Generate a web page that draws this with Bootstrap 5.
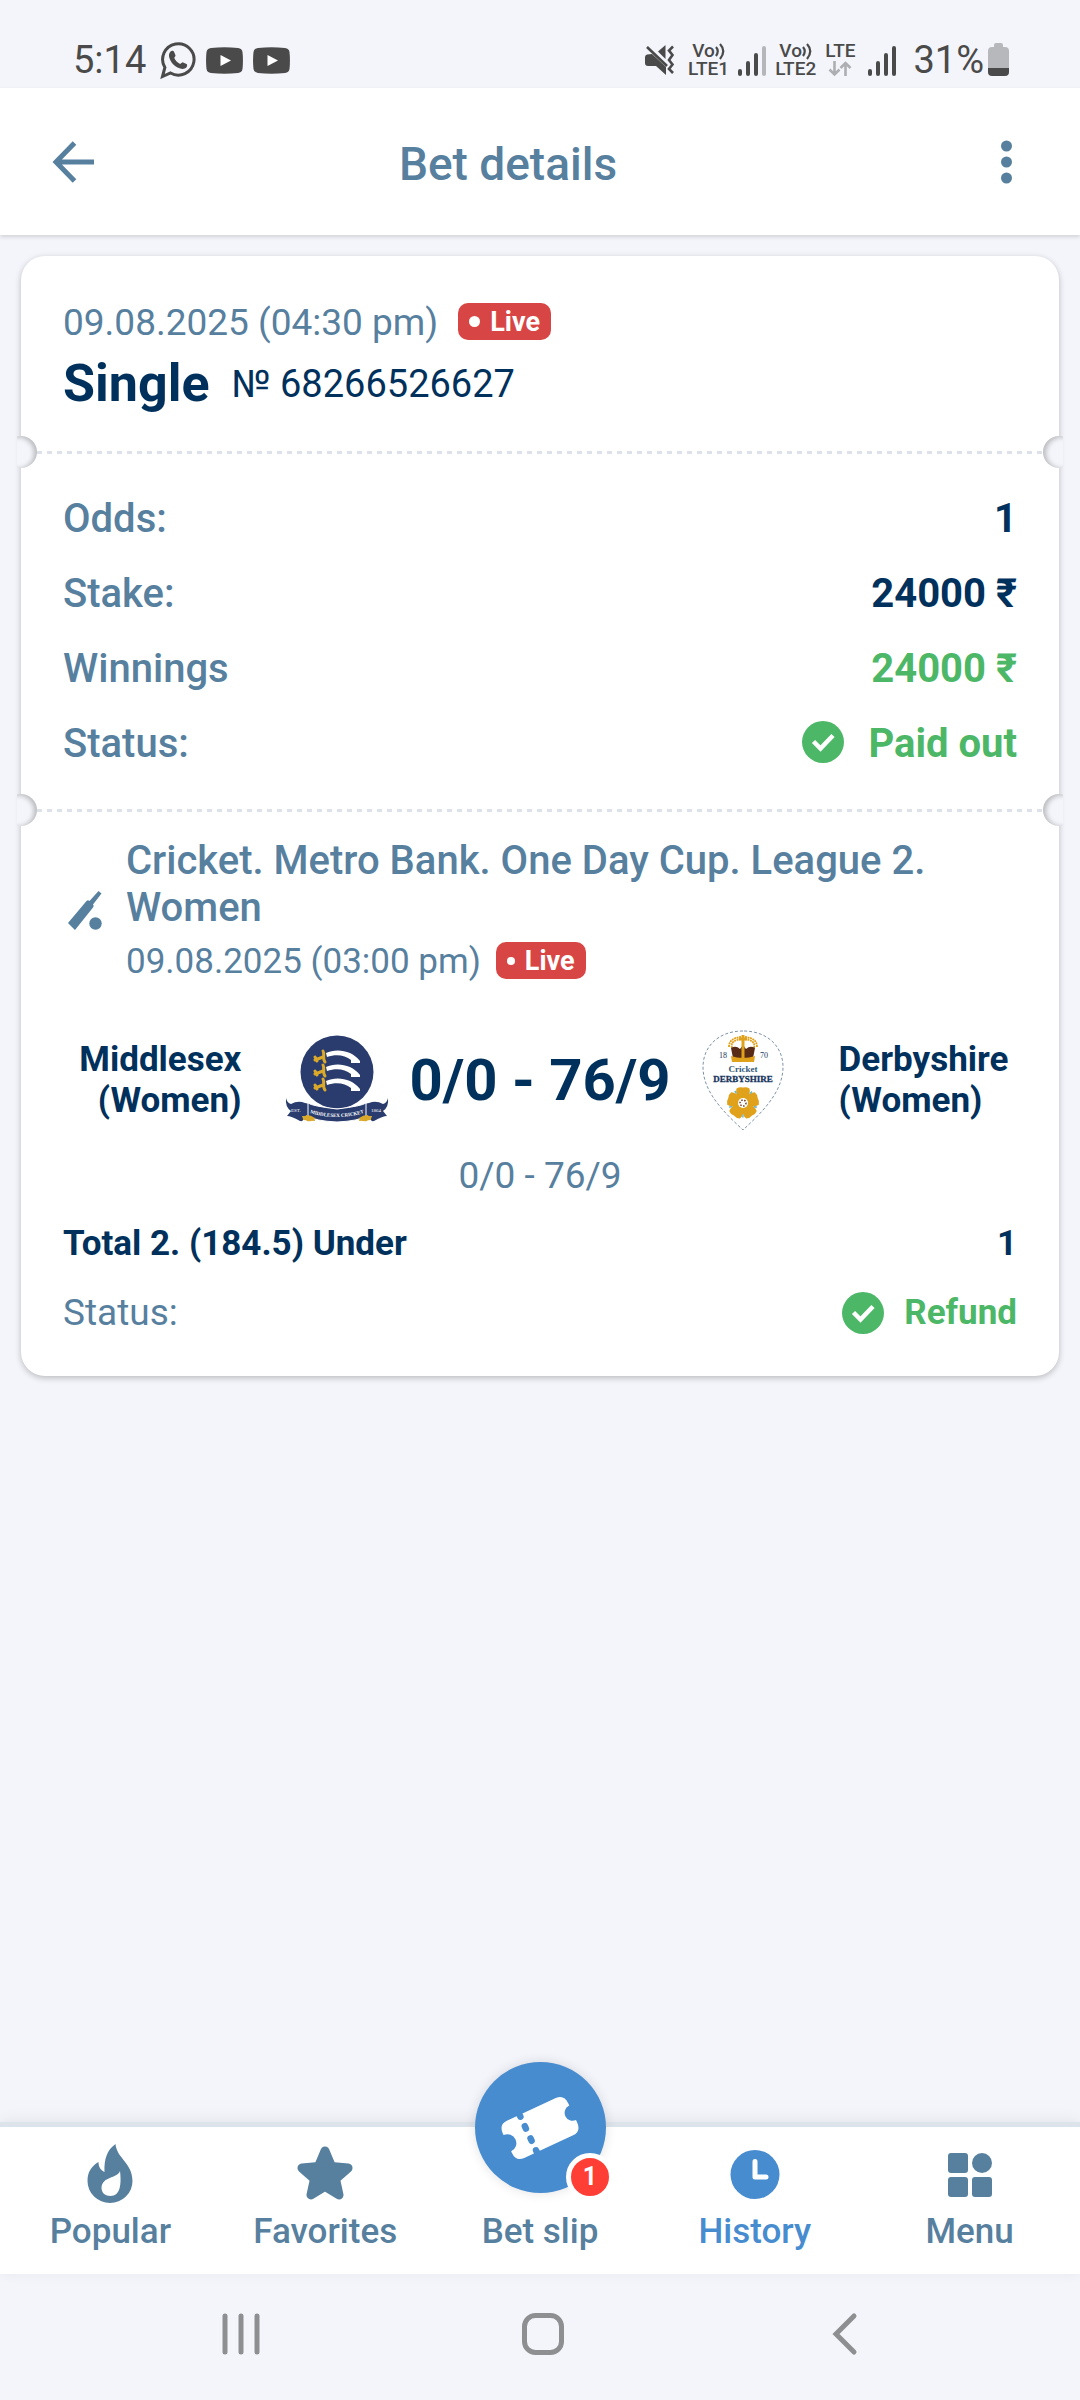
<!DOCTYPE html>
<html lang="en">
<head>
<meta charset="utf-8">
<meta name="viewport" content="width=device-width, initial-scale=1">
<title>Bet details</title>
<link href="https://cdn.jsdelivr.net/npm/bootstrap@5.3.0/dist/css/bootstrap.min.css" rel="stylesheet">
<style>
:root{--slate:#57809f;--navy:#00315c;--ok:#4db768;--live:#d84545;--brand:#488cd0;--page:#f4f5fa;--ink:#4a4a4a}
body{background:var(--page);color:var(--navy);font-family:Roboto,"Noto Sans",sans-serif;font-size:37px;line-height:40px}
svg{display:block;flex:none}
.fw-mid{font-weight:500}
.c-slate{color:var(--slate)}
.c-ok{color:var(--ok)}
.statusbar{height:88px;padding:40px 71px 0 73px;color:var(--ink);font-size:38px}
.status-left{gap:10px}
.status-right{gap:9px}
.lte{font-size:19px;line-height:18px;font-weight:500}
.topbar{height:147px;padding:0 36px;box-shadow:0 2px 4px rgba(0,0,0,.14)}
.topbar h1{font-size:46px;line-height:52px;font-weight:500;padding-top:5px;margin-right:64px}
.iconbtn{width:64px;height:64px;padding:0;border:0;background:none;color:var(--slate)}
.content{padding:21px 21px 48px}
.ticket{border:0;border-radius:24px;box-shadow:0 2px 6px rgba(0,0,0,.24);color:var(--navy)}
.part{padding-left:42px;padding-right:42px}
.part-head{padding-top:47px;padding-bottom:36px}
.part-sum{padding-top:27px;padding-bottom:28px}
.part-event{padding-top:25px;padding-bottom:42px}
.tear{position:relative;height:3px;margin:0 16px;background:repeating-linear-gradient(90deg,#dde2ea 0 5px,transparent 5px 10px)}
.tear::before,.tear::after{content:"";position:absolute;top:-15px;width:32px;height:32px;border-radius:50%;background:var(--page)}
.tear::before{left:-32px;clip-path:inset(0 0 0 12px);box-shadow:inset -3px 1px 5px rgba(0,0,0,.24)}
.tear::after{right:-32px;clip-path:inset(0 12px 0 0);box-shadow:inset 3px 1px 5px rgba(0,0,0,.24)}
.placed{gap:20px}
.starts{gap:15px;font-size:35px;padding-top:11px}
.live{background:var(--live);color:#fff;border-radius:10px;height:37px;padding:0 11px;font-size:27px;line-height:36px;font-weight:700;gap:10px}
.live i{width:11px;height:11px;border-radius:50%;background:#fff}
.starts .live i{width:8px;height:8px}
.kind{font-size:52px;line-height:62px;font-weight:700}
.headline{margin-top:10px;gap:22px}
.betno{font-size:38px;line-height:62px}
.sumrow{font-size:40px;line-height:75px}
.league{font-size:40px;line-height:47px;font-weight:500}
.sport{margin-right:15px}
.team{flex:1 1 0;line-height:41px}
.team,.outcome{font-weight:700;font-size:35px}
.teams{gap:44px;margin-top:46px}
.score{font-size:58px;line-height:104px;font-weight:700;padding:0 20px}
.row-gap{margin-top:28px}
.tabbar{border-top:5px solid #dde3ea;padding:0 3px;box-shadow:0 -2px 14px rgba(0,0,0,.07)}
.tabbar a{flex:1 1 0;padding:16px 0 22px;gap:9px;font-size:35px;font-weight:500;color:var(--slate);text-decoration:none}
.tabbar a.current{color:var(--brand)}
.tabicon{height:60px}
.fab{position:absolute;top:-65px;left:50%;margin-left:-65px;width:131px;height:131px;border-radius:50%;background:var(--brand);box-shadow:0 0 12px rgba(0,0,0,.12)}
.counter{position:absolute;right:-8px;bottom:-8px;width:48px;height:48px;border:5px solid #fff;border-radius:50%;background:#ff3e35;color:#fff;font-size:25px;line-height:38px;font-weight:700}
.sysnav{height:126px;gap:238px;padding:0 0 2px 6px}
.sysnav .iconbtn{color:#8e8f91}
</style>
</head>
<body class="d-flex flex-column min-vh-100">

<div class="statusbar d-flex justify-content-between align-items-start">
  <div class="status-left d-flex align-items-center">
    <span class="me-1">5:14</span>
    <svg width="36" height="38" viewBox="0 0 36 38" fill="none" stroke="currentColor" stroke-width="3"><path d="M2.500 35.500l2.400-9A15.700 15.700 0 1 1 10.500 32z"/><path d="M10.500 10.500c1-1.200 3-1 3.500.3l1.500 3.500c.3 1-1.300 2.200-1.200 2.800 1 2.600 3.200 4.800 5.800 5.800.8.200 2-1.900 3-1.500l3.400 1.700c1 .5.700 2.200 0 3.200-1.700 2-4.500 2-7 1-5.300-2-9-6-10.300-11-.6-2.200 0-4.500 1.300-5.800z" fill="currentColor" stroke="none"/></svg>
    <svg width="37" height="27" viewBox="0 0 37 27"><path fill="currentColor" d="M5 1Q18.500-.6 32 1q4 .5 4.500 4 .9 8.500 0 17-.5 3.500-4.500 4-13.500 1.500-27 0-4-.5-4.500-4-.9-8.500 0-17Q1 1.500 5 1z"/><path fill="#fff" d="M14.500 8l10.500 5.500L14.500 19z"/></svg>
    <svg width="37" height="27" viewBox="0 0 37 27"><path fill="currentColor" d="M5 1Q18.500-.6 32 1q4 .5 4.500 4 .9 8.500 0 17-.5 3.500-4.500 4-13.500 1.500-27 0-4-.5-4.500-4-.9-8.500 0-17Q1 1.500 5 1z"/><path fill="#fff" d="M14.500 8l10.500 5.500L14.500 19z"/></svg>
  </div>
  <div class="status-right d-flex align-items-center">
    <svg class="me-1" width="30" height="30" viewBox="0 0 30 30"><path fill="currentColor" d="M20.500 0v14L13 6.500zM0 12q0-2 2-2.500l5-.5L21 22v8l-10-9H3q-3 0-3-3z"/><path d="M2 2l20 19M28 1.500l-4 4 3.500 4.500-3.500 5 3.500 4.500-3.500 4.500 4 4" fill="none" stroke="currentColor" stroke-width="2.600"/></svg>
    <div class="lte">
      <div class="d-flex justify-content-center">Vo<svg width="10" height="18" viewBox="0 0 10 18" fill="none" stroke="currentColor" stroke-width="2.200"><path d="M1 5q3.500 4 0 9M5 2q6.500 7 0 15"/></svg></div><div>LTE1</div>
    </div>
    <svg width="28" height="31" viewBox="0 0 28 31" stroke="currentColor" stroke-width="4" stroke-linecap="round"><path d="M2 26v3M10 18v11M18 10v19"/><path d="M26 3v26" stroke="#b5b6b9"/></svg>
    <div class="lte">
      <div class="d-flex justify-content-center">Vo<svg width="10" height="18" viewBox="0 0 10 18" fill="none" stroke="currentColor" stroke-width="2.200"><path d="M1 5q3.500 4 0 9M5 2q6.500 7 0 15"/></svg></div><div>LTE2</div>
    </div>
    <div class="lte">
      <div>LTE</div>
      <svg width="24" height="18" viewBox="0 0 24 18" class="mx-auto" fill="none" stroke="#adaeb1" stroke-width="2.600"><path d="M6.500 1v13M1.500 9.500l5 5 5-5M17.500 16V3M12.500 8l5-5 5 5"/></svg>
    </div>
    <svg class="ms-1 me-2" width="28" height="31" viewBox="0 0 28 31" stroke="currentColor" stroke-width="4" stroke-linecap="round"><path d="M2 26v3M10 18v11M18 10v19M26 3v26"/></svg>
    <div class="d-flex align-items-center gap-1">
      <span>31%</span>
      <svg width="21" height="34" viewBox="0 0 21 34"><path fill="#b7b8bc" d="M6 2q0-2 2-2h5q2 0 2 2v2h2q4 0 4 4v17H0V8q0-4 4-4h2z"/><path fill="currentColor" d="M0 25h21v4q0 4-4 4H4q-4 0-4-4z"/></svg>
    </div>
  </div>
</div>

<header class="topbar bg-white d-flex justify-content-between align-items-center">
  <button type="button" class="iconbtn" aria-label="Back"><svg width="64" height="64" viewBox="0 0 64 64" fill="none" stroke="currentColor" stroke-width="5"><path d="M58 32H20M38.500 13L20 32l18.500 19"/></svg></button>
  <h1 class="c-slate mb-0">Bet details</h1>
  <button type="button" class="iconbtn" aria-label="More"><svg width="64" height="64" viewBox="0 0 64 64" fill="currentColor"><circle cx="26.500" cy="16" r="5.500"/><circle cx="26.500" cy="32" r="5.500"/><circle cx="26.500" cy="48" r="5.500"/></svg></button>
</header>

<main class="content flex-grow-1">
  <section class="card ticket">
    <div class="part part-head">
      <div class="placed d-flex align-items-start">
        <span class="c-slate">09.08.2025 (04:30 pm)</span>
        <span class="live d-flex align-items-center"><i></i>Live</span>
      </div>
      <div class="headline d-flex align-items-center">
        <span class="kind">Single</span>
        <span class="betno">№ 68266526627</span>
      </div>
    </div>

    <div class="tear"></div>

    <div class="part part-sum">
      <div class="sumrow d-flex justify-content-between"><span class="c-slate fw-mid">Odds:</span><span class="fw-bold">1</span></div>
      <div class="sumrow d-flex justify-content-between"><span class="c-slate fw-mid">Stake:</span><span class="fw-bold">24000 ₹</span></div>
      <div class="sumrow d-flex justify-content-between"><span class="c-slate fw-mid">Winnings</span><span class="fw-bold c-ok">24000 ₹</span></div>
      <div class="sumrow d-flex justify-content-between"><span class="c-slate fw-mid">Status:</span>
        <span class="fw-bold c-ok d-flex align-items-center gap-4">
          <svg class="mb-1" width="42" height="42" viewBox="0 0 42 42"><circle cx="21" cy="21" r="21" fill="currentColor"/><path d="M11.500 20.500l7 7L31 14.500" fill="none" stroke="#fff" stroke-width="4.500"/></svg>Paid out</span>
      </div>
    </div>

    <div class="tear"></div>

    <div class="part part-event">
      <div class="d-flex align-items-center">
        <svg class="sport c-slate" width="48" height="48" viewBox="0 0 48 48" fill="currentColor"><path d="M5 37l18.500-22q1.500-1.500 3 0L35.500 5l3 2.500L30 18.500q1.500 1.500 0 3L12 44z"/><circle cx="32.500" cy="37.500" r="6.200"/></svg>
        <div>
          <div class="league c-slate">Cricket. Metro Bank. One Day Cup. League 2. Women</div>
          <div class="starts d-flex align-items-start">
            <span class="c-slate">09.08.2025 (03:00 pm)</span>
            <span class="live d-flex align-items-center"><i></i>Live</span>
          </div>
        </div>
      </div>

      <div class="teams d-flex align-items-center">
        <div class="team text-end">Middlesex<br>(Women)</div>
        <div class="d-flex align-items-center">
          <svg width="104" height="104" viewBox="0 0 104 104">
            <circle cx="52" cy="44" r="36.500" fill="#293c6d"/>
            <g id="sword"><path fill="#fff" d="M41 25c10-5 26-3 34 8v2h-9v-3c-6-5-15-6-24-3z"/><path d="M30 32l8-3M38 23c2 3-1 8 2 11M30 29l2 4" stroke="#dba92a" stroke-width="3" fill="none" stroke-linecap="round"/></g>
            <use href="#sword" y="14"/><use href="#sword" y="28"/>
            <path fill="#dba92a" d="M16 84l13 1 1 8-12-1zM75 85l13-1-2 8-12 1z"/>
            <path fill="#293c6d" d="M1 70q1 5 5 6 7-4 14-1l5 1v12H17q3 6-2 5Q6 88 2 88l4-5q-6-4-5-13zM103 70q-1 5-5 6-7-4-14-1l-5 1v12h8q-3 6 2 5 9-5 13-5l-4-5q6-4 5-13z"/>
            <path fill="#293c6d" stroke="#fff" d="M23 75q4 3 29 6 25-3 29-6v13q-7 5-29 6-22-1-29-6z"/>
            <path fill="#dba92a" d="M21 87q5 0 9 3-2 4-8 3-3-3-1-6zM83 87q-5 0-9 3 2 4 8 3 3-3 1-6z"/>
            <path id="scroll" d="M22 84q30 10 60 0" fill="none"/>
            <text font-family="Liberation Serif,serif" font-size="5" font-weight="700" fill="#fff"><textPath href="#scroll" startOffset="50%" text-anchor="middle">MIDDLESEX CRICKET</textPath></text>
            <text x="6" y="84" font-family="Liberation Serif,serif" font-size="5" fill="#fff">EST.</text><text x="86" y="84" font-family="Liberation Serif,serif" font-size="5" fill="#fff">1864</text>
          </svg>
          <div class="score">0/0 - 76/9</div>
          <svg width="104" height="104" viewBox="0 0 104 104">
            <path d="M52 3C27 3 12 19 12 39c0 26 23 47 40 63 17-16 40-37 40-63C92 19 77 3 52 3z" fill="#fff" stroke="#7d92a8" stroke-width="1" stroke-dasharray="3 2"/>
            <path d="M41 20q-2-8 10-9M63 20q2-8-10-9M38 19q0-9 12-10M66 19q0-9-12-10" fill="none" stroke="#e0a11b" stroke-width="1.800" stroke-dasharray="2 .6"/>
            <path fill="#592c18" d="M40 20q5-3 9 1l3-4 3 4q4-4 9-1l-2 10H42z"/>
            <path fill="#e0a11b" d="M50.500 13h3v17h-3zM40 28q12 4 24 0l-1 6H41zM50.500 7h3v2.500H56v3h-2.500V15h-3v-2.500H48v-3h2.500z"/>
            <g font-family="Liberation Serif,serif" text-anchor="middle" fill="#17365d"><text x="32" y="30" font-size="8">18</text><text x="73" y="30" font-size="8">70</text><text x="52" y="44" font-size="9" font-weight="700" fill="#315878">Cricket</text><text x="52" y="54" font-size="9" font-weight="700" stroke="#17365d" stroke-width=".3">DERBYSHIRE</text></g>
            <g transform="translate(52 75)"><g fill="#e0a11b"><path id="petal" d="M-3.500-3.500Q-8-9-6.500-14.500q3-2 6.500-1 3.500-1 6.500 1Q8-9 3.500-3.500z"/><use href="#petal" transform="rotate(72)"/><use href="#petal" transform="rotate(144)"/><use href="#petal" transform="rotate(216)"/><use href="#petal" transform="rotate(288)"/></g><circle r="5" fill="#fff"/><circle r="3" fill="none" stroke="#7a3c22" stroke-width="1.500" stroke-dasharray="1.500 1.500"/><circle r="13" fill="none" stroke="#6fb5c6" stroke-width="3" stroke-dasharray="1.500 14.830" stroke-dashoffset="-3.300"/></g>
          </svg>
        </div>
        <div class="team">Derbyshire<br>(Women)</div>
      </div>
      <div class="c-slate text-center pt-4">0/0 - 76/9</div>
      <div class="row-gap d-flex justify-content-between outcome"><span>Total 2. (184.5) Under</span><span>1</span></div>
      <div class="row-gap d-flex justify-content-between align-items-center">
        <span class="c-slate">Status:</span>
        <span class="outcome c-ok d-flex align-items-center gap-3">
          <svg width="42" height="42" viewBox="0 0 42 42"><circle cx="21" cy="21" r="21" fill="currentColor"/><path d="M11.500 20.500l7 7L31 14.500" fill="none" stroke="#fff" stroke-width="4.500"/></svg><span class="ms-1">Refund</span></span>
      </div>
    </div>
  </section>
</main>

<nav class="tabbar bg-white d-flex" aria-label="Sections">
  <a href="#" class="d-flex flex-column align-items-center">
    <svg class="tabicon" width="46" height="60" viewBox="0 0 46 60"><path fill="currentColor" fill-rule="evenodd" d="M28.500 1c1 14 17 19 17 37a22.500 22 0 0 1-45 0c0-9 4-15 11-19 0 5 2 8 6 10C17 16 20 7 28.500 1zM33 28c-3 8-18 5-18.500 17 0 5 4 8 9 8 10 0 11-12 9.500-25z"/></svg>
    Popular</a>
  <a href="#" class="d-flex flex-column align-items-center">
    <svg class="tabicon" width="56" height="60" viewBox="0 0 56 60"><path fill="currentColor" stroke="currentColor" stroke-width="9" stroke-linejoin="round" d="M28 8l6.500 15.500L51 25 38.500 36l3.500 16-14-8.500L14 52l3.500-16L5 25l16.500-1.500z"/></svg>
    Favorites</a>
  <a href="#" class="d-flex flex-column align-items-center position-relative">
    <span class="fab d-flex align-items-center justify-content-center">
      <svg width="90" height="90" viewBox="-45 -45 90 90"><g transform="rotate(-25)"><path fill="#fff" d="M-27-20.500H27q9 0 9 10v2.500a8 8 0 0 0 0 16v2.500q0 10-9 10H-27q-9 0-9-10V9a9 9 0 0 0 0-18v-1.500q0-10 9-10z"/><path d="M-13-22v3.500M-13-8v2.500M-13 5.500V8M-13 18.500V22" stroke="#488cd0" stroke-width="6.500" stroke-linecap="round"/></g></svg>
      <span class="counter text-center">1</span>
    </span>
    <span class="tabicon"></span>
    Bet slip</a>
  <a href="#" class="current d-flex flex-column align-items-center" aria-current="page">
    <svg class="tabicon" width="50" height="60" viewBox="0 0 50 60"><circle cx="25" cy="31.500" r="24.500" fill="currentColor"/><path d="M25 18.500V34h11" fill="none" stroke="#fff" stroke-width="5" stroke-linecap="round" stroke-linejoin="round"/></svg>
    History</a>
  <a href="#" class="d-flex flex-column align-items-center">
    <svg class="tabicon" width="44" height="60" viewBox="0 0 44 60" fill="currentColor"><rect y="10" width="20" height="20" rx="3"/><circle cx="34" cy="20" r="10"/><rect y="34" width="20" height="20" rx="3"/><rect x="24" y="34" width="20" height="20" rx="3"/></svg>
    Menu</a>
</nav>

<div class="sysnav d-flex justify-content-center align-items-center">
  <button type="button" class="iconbtn" aria-label="Recent apps"><svg width="64" height="64" viewBox="0 0 64 64" stroke="currentColor" stroke-width="5" stroke-linecap="round"><path d="M16 12v36M32 12v36M48 12v36"/></svg></button>
  <button type="button" class="iconbtn" aria-label="Home"><svg width="64" height="64" viewBox="0 0 64 64" fill="none" stroke="currentColor" stroke-width="5"><rect x="13.500" y="11.500" width="37" height="37" rx="11"/></svg></button>
  <button type="button" class="iconbtn" aria-label="Back"><svg width="64" height="64" viewBox="0 0 64 64" fill="none" stroke="currentColor" stroke-width="5" stroke-linecap="round"><path d="M41 12L23 30l18 18"/></svg></button>
</div>

<script src="https://cdn.jsdelivr.net/npm/bootstrap@5.3.0/dist/js/bootstrap.bundle.min.js"></script>
</body>
</html>
